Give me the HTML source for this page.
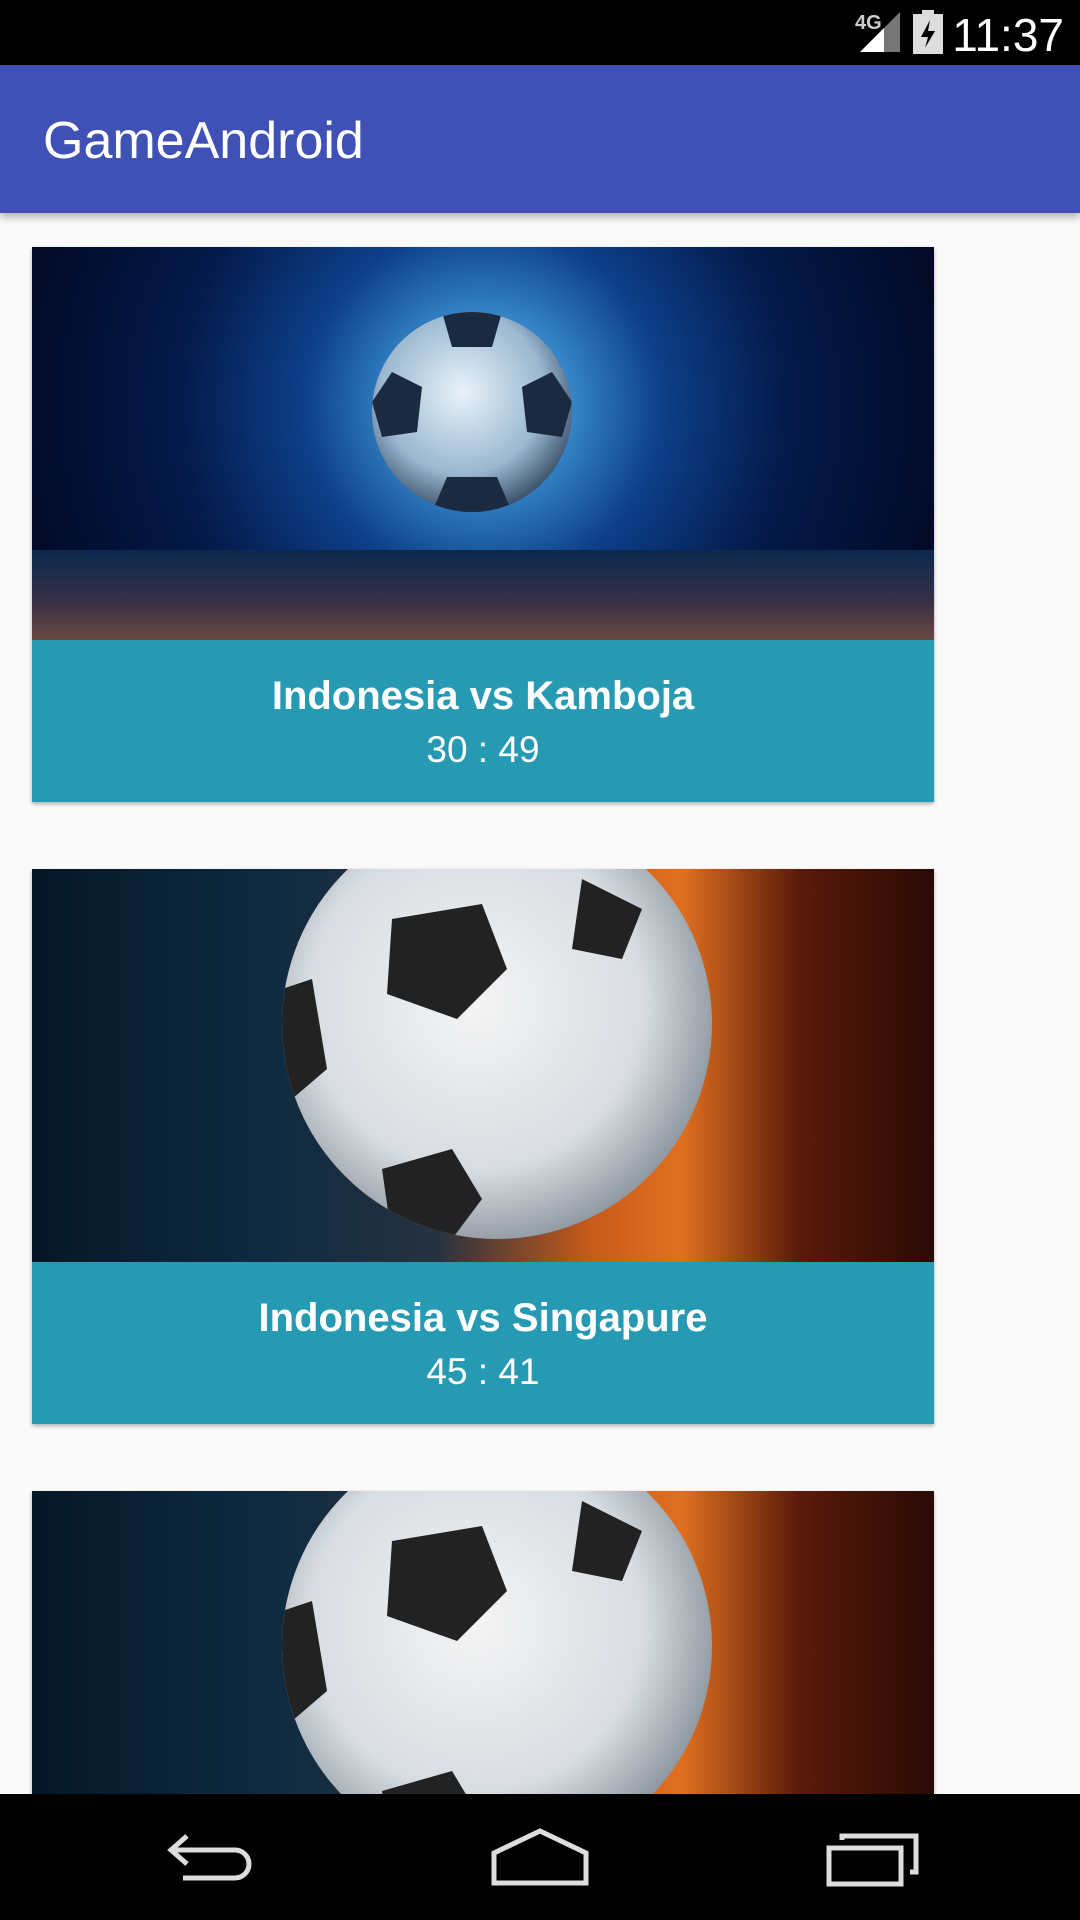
<!DOCTYPE html>
<html><head><meta charset="utf-8"><style>
*{margin:0;padding:0;box-sizing:border-box}
body{width:1080px;height:1920px;background:#fafafa;font-family:"Liberation Sans",sans-serif;position:relative;overflow:hidden}
.status{position:absolute;top:0;left:0;width:1080px;height:65px;background:#000;color:#fff}
.time{position:absolute;right:16px;top:8px;font-size:46px}
.appbar{position:absolute;top:65px;left:0;width:1080px;height:148px;background:#3f51b5;box-shadow:0 4px 8px rgba(0,0,0,.3)}
.appbar span{position:absolute;left:43px;top:46px;color:#fff;font-size:52px}
.card{position:absolute;left:32px;width:902px;box-shadow:0 2px 4px rgba(0,0,0,.3);background:#fff}
.img{height:393px;position:relative;overflow:hidden}
.info{height:162px;background:#269ab3;color:#fff;text-align:center}
.info .t{font-weight:bold;font-size:40px;padding-top:34px}
.info .s{font-size:37px;margin-top:10px}
.blue{background:radial-gradient(circle at 50% 40%,#9fd0f0 0,#3a8fd0 15%,#0d3f8a 35%,#041a4a 60%,#01061e 100%)}
.blue:after{content:"";position:absolute;left:0;right:0;bottom:0;height:90px;background:linear-gradient(#0c2850,#3a3045 60%,#6a4a40)}
.ball{position:absolute;border-radius:50%;overflow:hidden}
.fire{background:linear-gradient(90deg,#061726 0,#0d2a40 25%,#263240 45%,#c85a1a 62%,#e07020 72%,#5a1a0a 85%,#2a0a05 100%)}
.nav{position:absolute;bottom:0;left:0;width:1080px;height:126px;background:#000}
</style></head><body>
<div class="status"><span style="position:absolute;left:855px;top:12px;color:#ccc;font-size:20px;font-weight:bold">4G</span>
<svg style="position:absolute;left:860px;top:12px" width="40" height="40"><polygon points="40,0 40,40 0,40" fill="#777"/><polygon points="24,16 24,40 0,40" fill="#fff"/></svg>
<svg style="position:absolute;left:913px;top:10px" width="30" height="44"><rect x="0" y="4" width="30" height="40" fill="#ddd"/><rect x="9" y="0" width="12" height="5" fill="#ddd"/><polygon points="17,10 8,27 15,27 12,38 22,21 15,21" fill="#000"/></svg>
<span class="time">11:37</span></div>
<div class="appbar"><span>GameAndroid</span></div>

<div class="card" style="top:247px">
<div class="img blue"><div class="ball" style="left:340px;top:65px;width:200px;height:200px;background:radial-gradient(circle at 45% 40%,#e8f2fa,#9ab8d0 50%,#2a3e58 80%,#102040)">
<svg width="200" height="200"><polygon points="70,0 130,0 120,35 80,35" fill="#1a2a40"/><polygon points="20,60 50,75 45,120 10,125 0,90" fill="#1a2a40"/><polygon points="150,75 180,60 200,90 190,125 155,120" fill="#1a2a40"/><polygon points="75,165 125,165 140,200 60,200" fill="#1a2a40"/></svg></div></div>
<div class="info"><div class="t">Indonesia vs Kamboja</div><div class="s">30 : 49</div></div></div>

<div class="card" style="top:869px">
<div class="img fire"><div class="ball" style="left:250px;top:-60px;width:430px;height:430px;background:radial-gradient(circle at 45% 45%,#f4f4f4,#d8dde2 50%,#8a939c 75%,#3a3a3a)">
<svg width="430" height="430"><polygon points="110,110 200,95 225,160 175,210 105,185" fill="#222"/><polygon points="300,70 360,100 340,150 290,140" fill="#222"/><polygon points="0,180 30,170 45,260 10,290 0,280" fill="#222"/><polygon points="100,360 170,340 200,390 170,430 110,430" fill="#222"/></svg></div></div>
<div class="info"><div class="t">Indonesia vs Singapure</div><div class="s">45 : 41</div></div></div>

<div class="card" style="top:1491px">
<div class="img fire"><div class="ball" style="left:250px;top:-60px;width:430px;height:430px;background:radial-gradient(circle at 45% 45%,#f4f4f4,#d8dde2 50%,#8a939c 75%,#3a3a3a)">
<svg width="430" height="430"><polygon points="110,110 200,95 225,160 175,210 105,185" fill="#222"/><polygon points="300,70 360,100 340,150 290,140" fill="#222"/><polygon points="0,180 30,170 45,260 10,290 0,280" fill="#222"/><polygon points="100,360 170,340 200,390 170,430 110,430" fill="#222"/></svg></div></div></div>

<div class="nav">
<svg style="position:absolute;left:165px;top:38px" width="90" height="50" fill="none" stroke="#ddd" stroke-width="5"><path d="M8 18 H70 a14 14 0 0 1 0 28 H18"/><path d="M22 4 L6 18 L22 32"/></svg>
<svg style="position:absolute;left:490px;top:33px" width="100" height="60" fill="none" stroke="#ddd" stroke-width="5"><path d="M4 26 L50 4 L96 26 V56 H4 Z"/></svg>
<svg style="position:absolute;left:826px;top:34px" width="94" height="60" fill="none" stroke="#ddd" stroke-width="5"><rect x="3" y="20" width="72" height="36"/><path d="M16 12 V8 H90 V44 H84"/></svg>
</div>
</body></html>
